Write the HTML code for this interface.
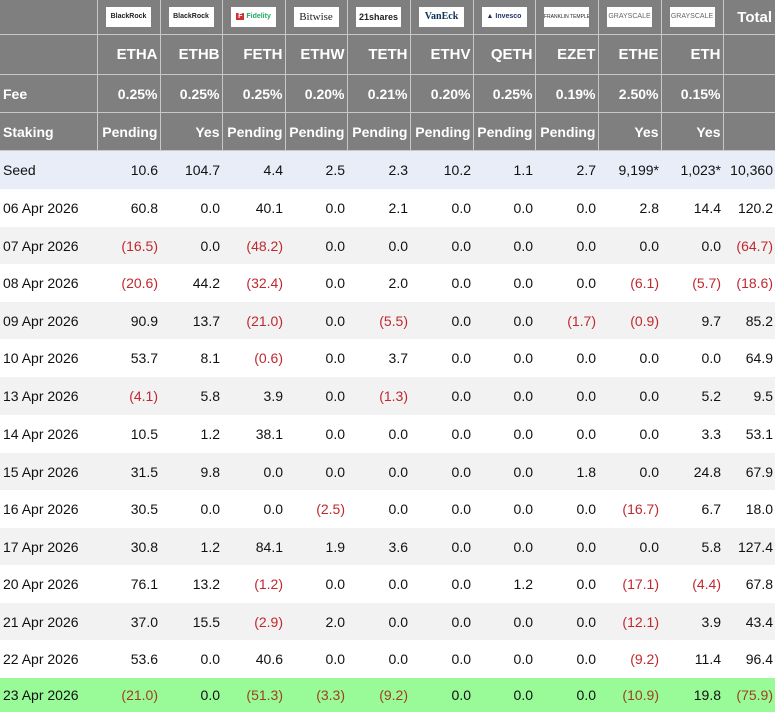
<!DOCTYPE html>
<html><head><meta charset="utf-8"><style>
body{margin:0;width:775px;height:712px;overflow:hidden;background:#fff;font-family:"Liberation Sans",Arial,sans-serif;}
table{border-collapse:collapse;table-layout:fixed;width:775px;font-size:14px;}
td{padding:0 2px 0 3px;text-align:right;white-space:nowrap;overflow:hidden;color:#111;}
td:first-child{text-align:left;padding-left:3px;}
tr.h td{background:#7f7f7f;color:#fff;font-weight:bold;border-left:1px solid #c8c8c8;border-bottom:1px solid #c8c8c8;}
tr.h td:first-child{border-left:none;}
tr.logo td{height:34px;text-align:center;padding:0;}
.lg{display:inline-block;background:#fff;width:45px;height:20px;line-height:20px;font-size:7px;color:#222;font-weight:bold;vertical-align:middle;overflow:hidden}
tr.t1 td{height:39px;font-size:15px}
tr.t2 td{height:37px;}
tr.t3 td{height:37px;}
tr.seed td{background:#e8edf7;height:38px}
tr.d td{height:38px}
tr.s td{height:37px}
tr.g td{background:#f2f2f2}
tr.gr td{background:#98fb98;height:34px}
.r{color:#c0282f}
tr.gr .r{color:#a0401a}
</style></head><body>
<table>
<colgroup><col style="width:97px"><col style="width:63px"><col style="width:62px"><col style="width:63px"><col style="width:62px"><col style="width:63px"><col style="width:63px"><col style="width:62px"><col style="width:63px"><col style="width:63px"><col style="width:62px"><col style="width:52px"></colgroup>
<tr class="h logo"><td></td><td><span class="lg">BlackRock</span></td><td><span class="lg">BlackRock</span></td><td><span class="lg" style="color:#2a6"><b style="background:#c33;color:#fff;padding:0 2px">F</b> Fidelity</span></td><td><span class="lg" style="font-family:'Liberation Serif',serif;font-size:11px;font-weight:normal">Bitwise</span></td><td><span class="lg" style="font-size:9px">21shares</span></td><td><span class="lg" style="color:#135;font-family:'Liberation Serif',serif;font-size:10px">VanEck</span></td><td><span class="lg" style="color:#236">▲ Invesco</span></td><td><span class="lg" style="font-size:5px;font-weight:normal">FRANKLIN TEMPLETON</span></td><td><span class="lg" style="font-weight:normal;color:#666">GRAYSCALE</span></td><td><span class="lg" style="font-weight:normal;color:#666">GRAYSCALE</span></td><td style="font-size:15px;text-align:right;padding-right:3px">Total</td></tr>
<tr class="h t1"><td></td><td>ETHA</td><td>ETHB</td><td>FETH</td><td>ETHW</td><td>TETH</td><td>ETHV</td><td>QETH</td><td>EZET</td><td>ETHE</td><td>ETH</td><td></td></tr>
<tr class="h t2"><td>Fee</td><td>0.25%</td><td>0.25%</td><td>0.25%</td><td>0.20%</td><td>0.21%</td><td>0.20%</td><td>0.25%</td><td>0.19%</td><td>2.50%</td><td>0.15%</td><td></td></tr>
<tr class="h t3"><td>Staking</td><td>Pending</td><td>Yes</td><td>Pending</td><td>Pending</td><td>Pending</td><td>Pending</td><td>Pending</td><td>Pending</td><td>Yes</td><td>Yes</td><td></td></tr>
<tr class="seed"><td>Seed</td><td>10.6</td><td>104.7</td><td>4.4</td><td>2.5</td><td>2.3</td><td>10.2</td><td>1.1</td><td>2.7</td><td>9,199*</td><td>1,023*</td><td>10,360</td></tr>
<tr class="d"><td>06 Apr 2026</td><td>60.8</td><td>0.0</td><td>40.1</td><td>0.0</td><td>2.1</td><td>0.0</td><td>0.0</td><td>0.0</td><td>2.8</td><td>14.4</td><td>120.2</td></tr>
<tr class="s g"><td>07 Apr 2026</td><td class="r">(16.5)</td><td>0.0</td><td class="r">(48.2)</td><td>0.0</td><td>0.0</td><td>0.0</td><td>0.0</td><td>0.0</td><td>0.0</td><td>0.0</td><td class="r">(64.7)</td></tr>
<tr class="d"><td>08 Apr 2026</td><td class="r">(20.6)</td><td>44.2</td><td class="r">(32.4)</td><td>0.0</td><td>2.0</td><td>0.0</td><td>0.0</td><td>0.0</td><td class="r">(6.1)</td><td class="r">(5.7)</td><td class="r">(18.6)</td></tr>
<tr class="s g"><td>09 Apr 2026</td><td>90.9</td><td>13.7</td><td class="r">(21.0)</td><td>0.0</td><td class="r">(5.5)</td><td>0.0</td><td>0.0</td><td class="r">(1.7)</td><td class="r">(0.9)</td><td>9.7</td><td>85.2</td></tr>
<tr class="d"><td>10 Apr 2026</td><td>53.7</td><td>8.1</td><td class="r">(0.6)</td><td>0.0</td><td>3.7</td><td>0.0</td><td>0.0</td><td>0.0</td><td>0.0</td><td>0.0</td><td>64.9</td></tr>
<tr class="d g"><td>13 Apr 2026</td><td class="r">(4.1)</td><td>5.8</td><td>3.9</td><td>0.0</td><td class="r">(1.3)</td><td>0.0</td><td>0.0</td><td>0.0</td><td>0.0</td><td>5.2</td><td>9.5</td></tr>
<tr class="d"><td>14 Apr 2026</td><td>10.5</td><td>1.2</td><td>38.1</td><td>0.0</td><td>0.0</td><td>0.0</td><td>0.0</td><td>0.0</td><td>0.0</td><td>3.3</td><td>53.1</td></tr>
<tr class="s g"><td>15 Apr 2026</td><td>31.5</td><td>9.8</td><td>0.0</td><td>0.0</td><td>0.0</td><td>0.0</td><td>0.0</td><td>1.8</td><td>0.0</td><td>24.8</td><td>67.9</td></tr>
<tr class="d"><td>16 Apr 2026</td><td>30.5</td><td>0.0</td><td>0.0</td><td class="r">(2.5)</td><td>0.0</td><td>0.0</td><td>0.0</td><td>0.0</td><td class="r">(16.7)</td><td>6.7</td><td>18.0</td></tr>
<tr class="s g"><td>17 Apr 2026</td><td>30.8</td><td>1.2</td><td>84.1</td><td>1.9</td><td>3.6</td><td>0.0</td><td>0.0</td><td>0.0</td><td>0.0</td><td>5.8</td><td>127.4</td></tr>
<tr class="d"><td>20 Apr 2026</td><td>76.1</td><td>13.2</td><td class="r">(1.2)</td><td>0.0</td><td>0.0</td><td>0.0</td><td>1.2</td><td>0.0</td><td class="r">(17.1)</td><td class="r">(4.4)</td><td>67.8</td></tr>
<tr class="s g"><td>21 Apr 2026</td><td>37.0</td><td>15.5</td><td class="r">(2.9)</td><td>2.0</td><td>0.0</td><td>0.0</td><td>0.0</td><td>0.0</td><td class="r">(12.1)</td><td>3.9</td><td>43.4</td></tr>
<tr class="d"><td>22 Apr 2026</td><td>53.6</td><td>0.0</td><td>40.6</td><td>0.0</td><td>0.0</td><td>0.0</td><td>0.0</td><td>0.0</td><td class="r">(9.2)</td><td>11.4</td><td>96.4</td></tr>
<tr class="gr"><td>23 Apr 2026</td><td class="r">(21.0)</td><td>0.0</td><td class="r">(51.3)</td><td class="r">(3.3)</td><td class="r">(9.2)</td><td>0.0</td><td>0.0</td><td>0.0</td><td class="r">(10.9)</td><td>19.8</td><td class="r">(75.9)</td></tr>
</table>
</body></html>
